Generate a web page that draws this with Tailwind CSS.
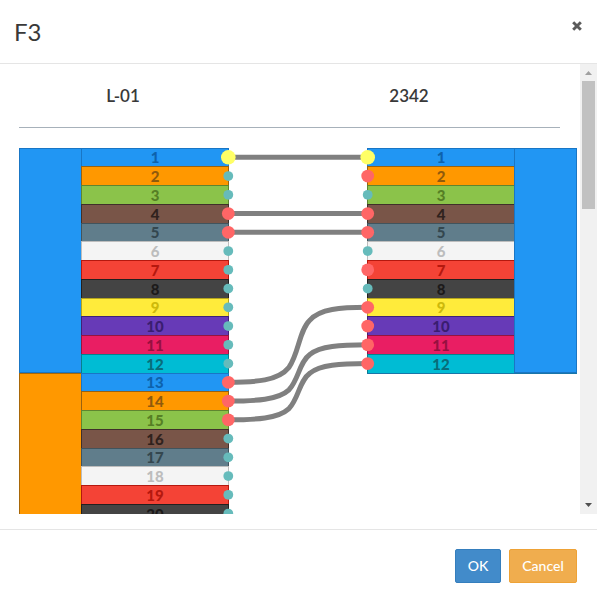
<!DOCTYPE html>
<html lang="en">
<head>
<meta charset="utf-8">
<title>F3</title>
<script src="https://cdn.jsdelivr.net/npm/@tailwindcss/browser@4"></script>
</head>
<body class="bg-white font-['Lato',sans-serif] text-[#393939]">
<div class="flex h-[602px] w-[597px] flex-col overflow-hidden bg-white">
  <header class="flex h-16 shrink-0 items-center justify-between border-b border-[#e5e5e5] pr-[15px] pl-3.5">
    <h1 class="text-2xl leading-8 font-normal pt-px">F3</h1>
    <button aria-label="Close" class="mb-3">
      <svg class="block h-[10px] w-[10px]" viewBox="0 0 10 10"><path d="M2.2 2.2L7.8 7.8M7.8 2.2L2.2 7.8" stroke="#5b5b5b" stroke-width="2.9" stroke-linecap="square"/></svg>
    </button>
  </header>
  <main class="flex h-[450px] shrink-0 overflow-hidden">
    <div class="h-full w-[580px] overflow-hidden pl-[19px]">
      <div class="flex h-16 w-[541px] border-b border-[#a7b1ba] pt-5 text-center text-[17px] leading-6 font-semibold">
        <div class="w-[208px]">L-01</div>
        <div class="ml-[78px] w-[208px]">2342</div>
      </div>
      <div class="relative mt-[19.6px] flex items-start justify-between w-[558px]">
        <div id="left" class="flex flex-col"></div>
        <div id="right" class="flex flex-col"></div>
        <svg id="links" class="absolute top-[-19.6px] left-[-19px] h-[390px] w-[580px]" viewBox="0 128 580 390" fill="none"></svg>
      </div>
    </div>
    <div class="flex w-[17px] flex-col items-center bg-[#f1f1f1]">
      <svg class="h-[17px] w-[17px] shrink-0" viewBox="0 0 17 17"><path d="M5 11L8.5 7L12 11Z" fill="#a0a0a0"/></svg>
      <div class="h-32 w-[13px] bg-[#c1c1c1]"></div>
      <svg class="mt-auto h-[17px] w-[17px] shrink-0" viewBox="0 0 17 17"><path d="M5 6H12L8.5 10Z" fill="#505050"/></svg>
    </div>
  </main>
  <footer class="mt-[15px] flex flex-1 items-start justify-end gap-2 border-t border-[#e5e5e5] pt-[19px] pr-5 text-sm leading-5 font-medium text-white">
    <button class="h-[34px] w-[46px] rounded-[2px] border border-[#357ebd] bg-[#428bca]">OK</button>
    <button class="h-[34px] w-[68px] rounded-[2px] border border-[#eea236] bg-[#f0ad4e]">Cancel</button>
  </footer>
</div>
<script>
const fibers = [
  'bg-[#2196f3] border-[#1976c5] text-[#0d62ac]',
  'bg-[#ff9800] border-[#996210] text-[#8f5a0c]',
  'bg-[#8bc34a] border-[#5f852f] text-[#567f25]',
  'bg-[#795548] border-[#40302a] text-[#30221d]',
  'bg-[#607d8b] border-[#41545d] text-[#34474f]',
  'bg-[#f4f4f4] border-[#bdbdbd] text-[#bdbdbd]',
  'bg-[#f44336] border-[#b5180e] text-[#b5180e]',
  'bg-[#444444] border-[#222020] text-[#1c1a1a]',
  'bg-[#ffeb3b] border-[#b5a51c] text-[#cdb90b]',
  'bg-[#673ab7] border-[#3f2277] text-[#3a1d70]',
  'bg-[#e91e63] border-[#941440] text-[#971040]',
  'bg-[#00bcd4] border-[#087e8d] text-[#086d7a]'
];
const cell = n => `<div class="flex h-[18.75px] w-[148px] items-center justify-center border-x border-t text-[15px] leading-none font-black ${fibers[(n - 1) % 12]}"><span class="pt-px">${n}</span></div>`;
const cells = (from, count) => Array.from({length: count}, (_, i) => cell(from + i)).join('');
const blue = '<div class="w-[63px] border border-[#1976c5] bg-[#2196f3]"></div>';
const orange = '<div class="w-[63px] border border-[#a86707] bg-[#ff9800]"></div>';
document.getElementById('left').innerHTML =
  `<div class="flex">${blue}<div class="-ml-px">${cells(1, 12)}</div></div><div class="flex">${orange}<div class="-ml-px">${cells(13, 8)}</div></div>`;
document.getElementById('right').innerHTML =
  `<div class="flex border-b border-[#1976a8]"><div class="-mr-px">${cells(1, 12)}</div>${blue}</div>`;

const y = n => 157.3 + (n - 1) * 18.75;
const links = [[1, 1], [4, 4], [5, 5], [13, 9], [14, 11], [15, 12]];
let out = '';
for (const [a, b] of links) {
  const p = y(a), q = y(b), h = p - q;
  const d = h === 0 ? `M228.3 ${p}H367.6`
    : `M228.3 ${p}C256 ${p} 278 ${p - h * .02} 289 ${p - h * .2}C299 ${p - h * .39} 299 ${p - h * .69} 310 ${p - h * .83}C320 ${q + h * .02} 340 ${q} 367.6 ${q}`;
  out += `<path d="${d}" stroke="#808080" stroke-width="5"/>`;
}
const dot = (x, n, active) => {
  const r = n === 1 ? 7.3 : active ? 6.4 : 4.9;
  const c = n === 1 ? '#ffff66' : active ? '#ff6666' : '#66bbbb';
  out += `<circle cx="${x}" cy="${y(n)}" r="${r}" fill="${c}"/>`;
};
for (let n = 1; n <= 20; n++) dot(228.3, n, links.some(l => l[0] === n));
for (let n = 1; n <= 12; n++) dot(367.7, n, [2, 7, 10].includes(n) || links.some(l => l[1] === n));
document.getElementById('links').innerHTML = out;
</script>
</body>
</html>
